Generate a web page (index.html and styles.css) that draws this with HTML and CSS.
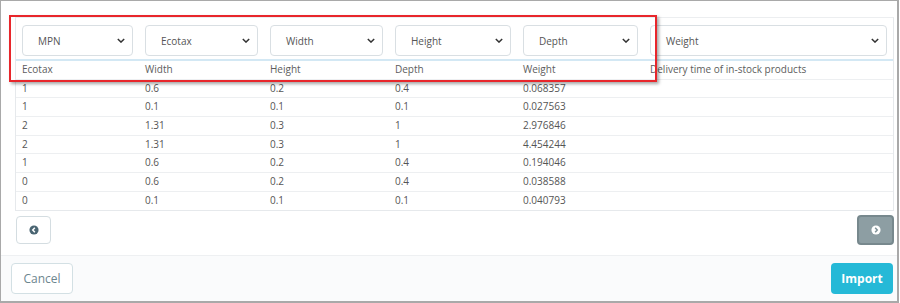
FILE: index.html
```html
<!DOCTYPE html>
<html>
<head>
<meta charset="utf-8">
<link rel="stylesheet" href="styles.css">
</head>
<body>
<div class="frame">
  <div class="content">
    <div class="table">
      <div class="row selects">
        <div class="cell"><div class="select"><span>MPN</span><svg class="chev" viewBox="0 0 10 6"><path d="M1 1l4 4 4-4" /></svg></div></div>
        <div class="cell"><div class="select"><span>Ecotax</span><svg class="chev" viewBox="0 0 10 6"><path d="M1 1l4 4 4-4" /></svg></div></div>
        <div class="cell"><div class="select"><span>Width</span><svg class="chev" viewBox="0 0 10 6"><path d="M1 1l4 4 4-4" /></svg></div></div>
        <div class="cell"><div class="select"><span>Height</span><svg class="chev" viewBox="0 0 10 6"><path d="M1 1l4 4 4-4" /></svg></div></div>
        <div class="cell"><div class="select"><span>Depth</span><svg class="chev" viewBox="0 0 10 6"><path d="M1 1l4 4 4-4" /></svg></div></div>
        <div class="cell"><div class="select"><span>Weight</span><svg class="chev" viewBox="0 0 10 6"><path d="M1 1l4 4 4-4" /></svg></div></div>
      </div>
      <div class="row head">
        <div class="cell">Ecotax</div><div class="cell">Width</div><div class="cell">Height</div><div class="cell">Depth</div><div class="cell">Weight</div><div class="cell">Delivery time of in-stock products</div>
      </div>
      <div class="row data"><div class="cell">1</div><div class="cell">0.6</div><div class="cell">0.2</div><div class="cell">0.4</div><div class="cell">0.068357</div><div class="cell"></div></div>
      <div class="row data"><div class="cell">1</div><div class="cell">0.1</div><div class="cell">0.1</div><div class="cell">0.1</div><div class="cell">0.027563</div><div class="cell"></div></div>
      <div class="row data"><div class="cell">2</div><div class="cell">1.31</div><div class="cell">0.3</div><div class="cell">1</div><div class="cell">2.976846</div><div class="cell"></div></div>
      <div class="row data"><div class="cell">2</div><div class="cell">1.31</div><div class="cell">0.3</div><div class="cell">1</div><div class="cell">4.454244</div><div class="cell"></div></div>
      <div class="row data"><div class="cell">1</div><div class="cell">0.6</div><div class="cell">0.2</div><div class="cell">0.4</div><div class="cell">0.194046</div><div class="cell"></div></div>
      <div class="row data"><div class="cell">0</div><div class="cell">0.6</div><div class="cell">0.2</div><div class="cell">0.4</div><div class="cell">0.038588</div><div class="cell"></div></div>
      <div class="row data last"><div class="cell">0</div><div class="cell">0.1</div><div class="cell">0.1</div><div class="cell">0.1</div><div class="cell">0.040793</div><div class="cell"></div></div>
    </div>
    <div class="pager">
      <button class="pbtn prev"><svg viewBox="0 0 12 12"><circle cx="6" cy="6" r="5.5" fill="#4a6572"/><path d="M7 3.3L4.5 6 7 8.7" fill="none" stroke="#fff" stroke-width="1.8"/></svg></button>
      <button class="pbtn next"><svg viewBox="0 0 12 12"><circle cx="6" cy="6" r="5.5" fill="#fff"/><path d="M5 3.3L7.5 6 5 8.7" fill="none" stroke="#7f9196" stroke-width="1.8"/></svg></button>
    </div>
  </div>
  <div class="footer">
    <button class="btn cancel">Cancel</button>
    <button class="btn import">Import</button>
  </div>
  <div class="highlight"></div>
</div>
</body>
</html>
```
FILE: styles.css
```css
* { box-sizing: border-box; }
html, body { margin: 0; padding: 0; background: #fff; }
body { font-family: "Open Sans", "Noto Sans", sans-serif; color: #555; }
.frame {
  position: relative;
  width: 899px;
  height: 303px;
  border: 1px solid #a9a9a9;
  border-right-width: 2px;
  border-bottom-width: 2px;
  display: flex;
  flex-direction: column;
  background: #fff;
}
.content {
  flex: 1;
  padding: 16px 3px 0 14px;
  border-bottom: 1px solid #eef0f2;
}
.table {
  border: 1px solid #e6e9ec;
  border-top-color: #eceef0;
}
.row {
  display: grid;
  grid-template-columns: 123px 125px 125px 128px 127px 1fr;
}
.selects .cell { padding: 7px 6px 3px 6px; }
.selects { border-bottom: 2px solid #d3e8f4; }
.select {
  height: 31px;
  border: 1px solid #d9dfe3;
  border-radius: 4px;
  display: flex;
  align-items: center;
  justify-content: space-between;
  padding: 0 7px 0 15px;
  font-size: 10px;
  color: #555;
  background: #fff;
}
.chev { width: 8px; height: 5px; }
.chev path { fill: none; stroke: #333; stroke-width: 1.8; }
.head .cell, .data .cell {
  font-size: 10px;
  height: 17.7px;
  line-height: 17px;
  padding-left: 6px;
  white-space: nowrap;
}
.head, .data { border-bottom: 1px solid #edeff1; }
.data.last { border-bottom: none; }
.head { color: #5d5d5d; }
.pager {
  display: flex;
  justify-content: space-between;
  align-items: flex-start;
  padding: 5px 0 0 1px;
}
.pbtn {
  display: flex;
  align-items: center;
  justify-content: center;
  border-radius: 4px;
  padding: 0;
  cursor: pointer;
}
.pbtn svg { width: 10px; height: 10px; }
.prev {
  width: 35px;
  height: 28px;
  border: 1px solid #d4dde1;
  background: #fff;
}
.next {
  width: 37px;
  height: 30px;
  margin-top: -1px;
  border: 2px solid #77888d;
  background: #8d9ea3;
}
.footer {
  height: 45px;
  background: #fafbfc;
  display: flex;
  justify-content: space-between;
  align-items: flex-start;
  padding: 7px 4px 0 10px;
}
.btn {
  height: 31px;
  border-radius: 4px;
  font-family: "Open Sans", "Noto Sans", sans-serif;
  font-size: 12px;
  padding: 0;
}
.cancel {
  width: 62px;
  border: 1px solid #d3e0e4;
  background: #fff;
  color: #6c868e;
}
.import {
  width: 62px;
  border: none;
  background: #25b9d7;
  color: #fff;
  font-weight: 700;
}
.highlight {
  position: absolute;
  left: 8px;
  top: 14px;
  width: 648px;
  height: 67px;
  border: 2px solid #e8262b;
  box-shadow: 2px 2px 3px rgba(0,0,0,0.35);
  pointer-events: none;
}
```
